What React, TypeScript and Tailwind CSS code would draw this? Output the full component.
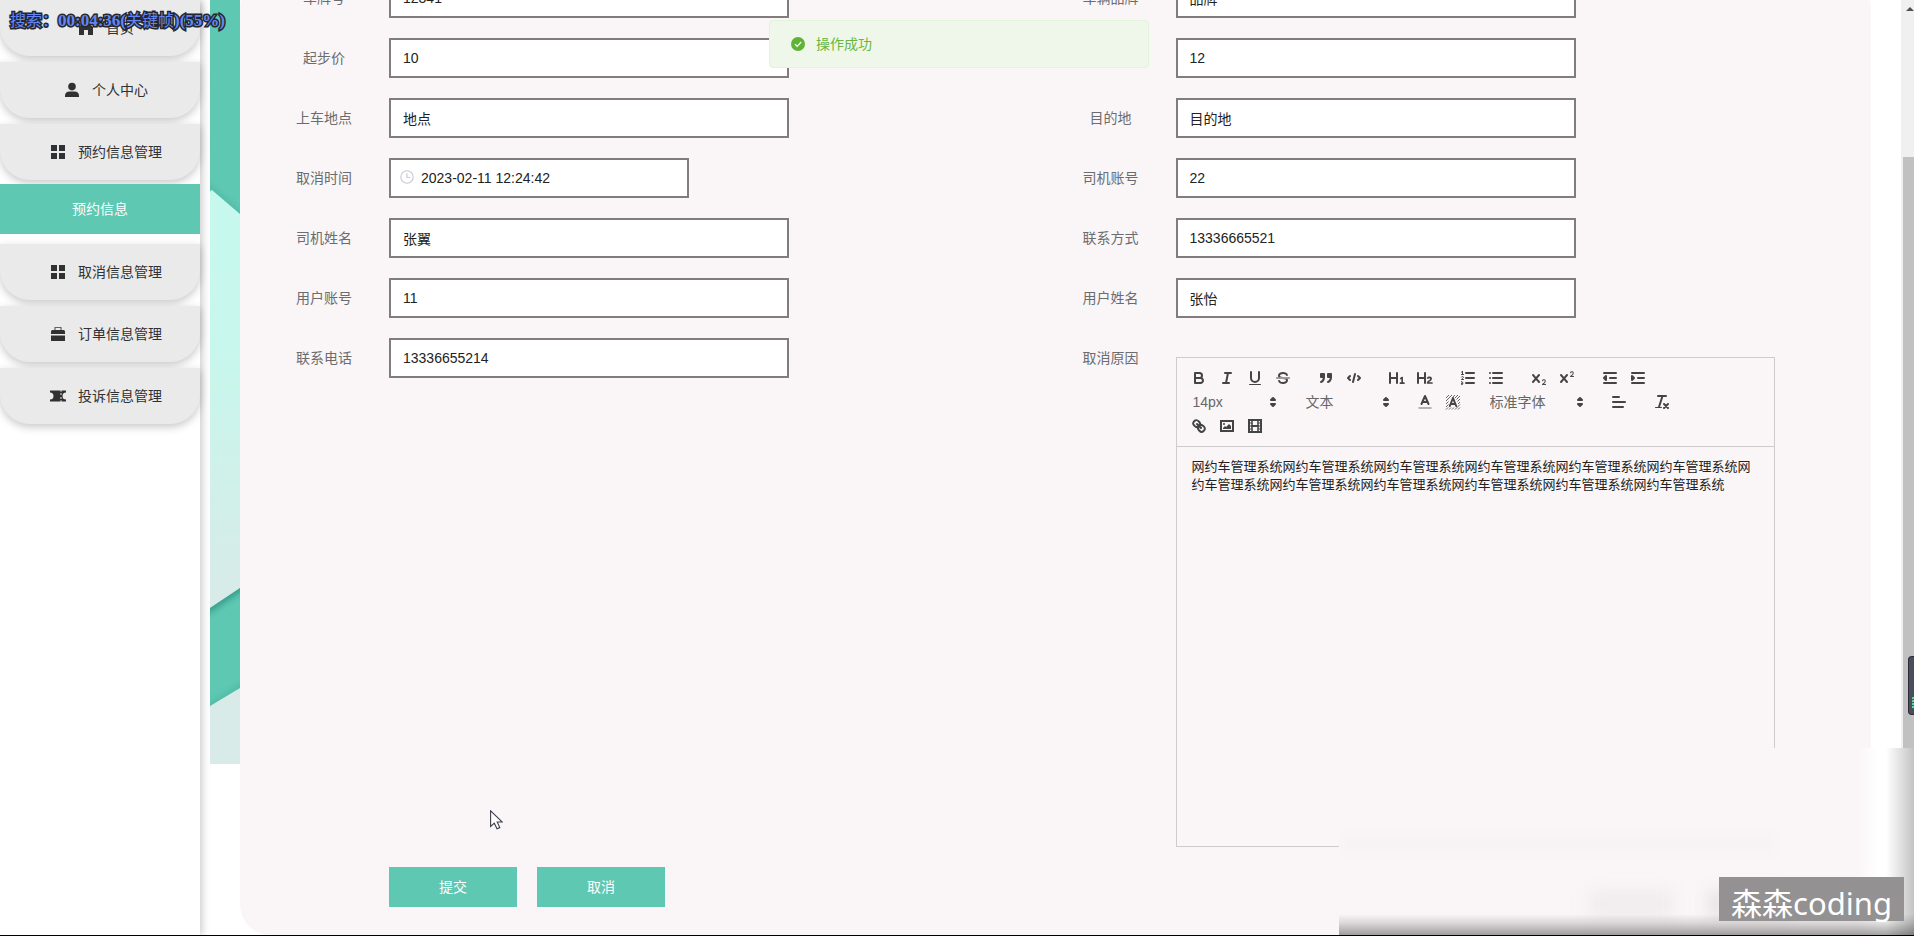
import React from "react";

const MENU_TOP = [
  { label: "首页", icon: "home" },
  { label: "个人中心", icon: "user" },
  { label: "预约信息管理", icon: "grid" },
];

const MENU_BOTTOM = [
  { label: "取消信息管理", icon: "grid" },
  { label: "订单信息管理", icon: "case" },
  { label: "投诉信息管理", icon: "ticket" },
];

function MenuIcon({ name }: { name: string }) {
  return (
    <svg viewBox="0 0 16 16" className="h-4 w-4 shrink-0 fill-[#303133]" aria-hidden="true">
      {name === "home" && <path d="M8 1 1 7v8h5v-5h4v5h5V7z" />}
      {name === "user" && (
        <>
          <circle cx="8" cy="4.6" r="3.8" />
          <path d="M1 15v-1.5C1 10.800 3 9.600 5.500 9.600h5c2.500 0 4.500 1.200 4.500 3.900V15z" />
        </>
      )}
      {name === "grid" && <path d="M1 1h6v6H1zM9 1h6v6H9zM1 9h6v6H1zM9 9h6v6H9z" />}
      {name === "case" && (
        <>
          <path d="M5 4V1.500h6V4" fill="none" stroke="#606266" strokeWidth="1.200" />
          <path d="M1 5.500Q1 4 2.500 4h11Q15 4 15 5.500V8H1zM1 9.500h14V15H1z" />
        </>
      )}
      {name === "ticket" && (
        <path d="M0 2.500h10.500v1.200h1V2.500H16v2a3.500 3.500 0 0 0 0 7v2h-4.500v-1.200h-1v1.200H0v-2a3.500 3.500 0 0 0 0-7zM10.500 5v2h1V5zm0 4v2h1V9z" fillRule="evenodd" />
      )}
    </svg>
  );
}

function MenuItem({ label, icon }: { label: string; icon: string }) {
  return (
    <a
      href="#"
      className="flex h-14 items-center justify-center gap-3 rounded-b-[30px] bg-[#eaeaea] pl-3 text-sm text-[#303133] shadow-[0_3px_8px_rgba(0,0,0,0.22)]"
    >
      <MenuIcon name={icon} />
      {label}
    </a>
  );
}

function Field({
  id,
  label,
  value,
  name,
}: {
  id: string;
  label?: string;
  value: string;
  name?: string;
}) {
  return (
    <div className="flex h-10 items-center">
      <label htmlFor={id} className="w-[130px] shrink-0 text-center text-sm text-[#6a6c70]">
        {label}
      </label>
      <input
        id={id}
        aria-label={name}
        defaultValue={value}
        className="h-10 w-[400px] border-2 border-[#827c7c] bg-white px-3 text-sm text-[#222] outline-none"
      />
    </div>
  );
}

function DateField() {
  return (
    <div className="flex h-10 items-center">
      <label htmlFor="cancelTime" className="w-[130px] shrink-0 text-center text-sm text-[#6a6c70]">
        取消时间
      </label>
      <div className="relative w-[300px]">
        <input
          id="cancelTime"
          defaultValue="2023-02-11 12:24:42"
          className="h-10 w-full border-2 border-[#827c7c] bg-white pr-3 pl-[30px] text-sm text-[#222] outline-none"
        />
        <svg viewBox="0 0 14 14" className="absolute top-[12px] left-[11px] h-3.5 w-3.5 fill-none stroke-[#c6c9d2]" aria-hidden="true">
          <circle cx="7" cy="7" r="6.200" strokeWidth="1.100" />
          <path d="M7 3.200V7.500h3.200" strokeWidth="1.100" />
        </svg>
      </div>
    </div>
  );
}

function Tool({ title, children }: { title: string; children: React.ReactNode }) {
  return (
    <button type="button" aria-label={title} className="flex h-6 w-7 items-center justify-center">
      <svg
        viewBox="0 0 18 18"
        className="h-[18px] w-[18px] fill-none stroke-[#444] stroke-2"
        strokeLinecap="round"
        strokeLinejoin="round"
        aria-hidden="true"
      >
        {children}
      </svg>
    </button>
  );
}

function Group({ children }: { children: React.ReactNode }) {
  return <div className="mr-[15px] flex">{children}</div>;
}

function Picker({ title, value, wide }: { title: string; value: string; wide?: boolean }) {
  return (
    <div className={wide ? "relative h-6 w-[108px]" : "relative h-6 w-[98px]"}>
      <select
        aria-label={title}
        defaultValue={value}
        className="h-6 w-full appearance-none bg-transparent pl-2 text-sm leading-6 text-[#666] outline-none"
      >
        <option>{value}</option>
      </select>
      <svg viewBox="0 0 18 18" className="pointer-events-none absolute top-[3px] right-px h-[18px] w-[18px] fill-[#444] stroke-[#444] stroke-2" strokeLinejoin="round" aria-hidden="true">
        <polygon points="7 11 9 13 11 11 7 11" />
        <polygon points="7 7 9 5 11 7 7 7" />
      </svg>
    </div>
  );
}

const solid = { fill: "#444", stroke: "none" };

function Toolbar() {
  return (
    <div className="flex flex-wrap border border-[#ccc] p-2">
      <Group>
        <Tool title="加粗">
          <path d="M5,4H9.500A2.500,2.500,0,0,1,12,6.500v0A2.500,2.500,0,0,1,9.500,9H5A0,0,0,0,1,5,9V4A0,0,0,0,1,5,4Z" />
          <path d="M5,9h5.500A2.500,2.500,0,0,1,13,11.500v0A2.500,2.500,0,0,1,10.500,14H5a0,0,0,0,1,0,0V9A0,0,0,0,1,5,9Z" />
        </Tool>
        <Tool title="斜体">
          <path d="M7 4H13M5 14H11M8 14 10 4" />
        </Tool>
        <Tool title="下划线">
          <path d="M5,3V9a4.012,4.012,0,0,0,4,4H9a4.012,4.012,0,0,0,4-4V3" />
          <rect x="3" y="15" width="12" height="1" rx="0.500" style={solid} />
        </Tool>
        <Tool title="删除线">
          <path d="M15.500 9H2.500" strokeWidth="1" />
          <path style={solid} d="M9.007,8C6.542,7.791,6,7.519,6,6.500,6,5.792,7.283,5,9,5c1.571,0,2.765.679,2.969,1.309a1,1,0,0,0,1.900-.617C13.356,4.106,11.354,3,9,3,6.200,3,4,4.538,4,6.500a3.200,3.200,0,0,0,.5,1.843Z" />
          <path style={solid} d="M8.984,10C11.457,10.208,12,10.479,12,11.500c0,0.708-1.283,1.500-3,1.500-1.571,0-2.765-.679-2.969-1.309a1,1,0,1,0-1.900.617C4.644,13.894,6.646,15,9,15c2.800,0,5-1.538,5-3.500a3.200,3.200,0,0,0-.5-1.843Z" />
        </Tool>
      </Group>
      <Group>
        <Tool title="引用">
          <g fill="#444">
            <rect x="4" y="5" width="3" height="3" />
            <rect x="11" y="5" width="3" height="3" />
          </g>
          <path fill="#444" fillRule="evenodd" d="M7,8c0,4.031-3,5-3,5M14,8c0,4.031-3,5-3,5" />
        </Tool>
        <Tool title="代码">
          <path d="M5 7 3 9 5 11M13 7 15 9 13 11M10 5 8 13" />
        </Tool>
      </Group>
      <Group>
        <Tool title="一级标题">
          <path style={solid} d="M10,4V14a1,1,0,0,1-2,0V10H3v4a1,1,0,0,1-2,0V4A1,1,0,0,1,3,4V8H8V4a1,1,0,0,1,2,0Zm6.068,9.209H14.981V8.433a.54.54,0,0,0-.605-.6h-.591a1.060,1.060,0,0,0-.781.341l-1.034.951a.494.494,0,0,0-.033.726l.341.407a.491.491,0,0,0,.738.033l.308-.264v3.182H12.268a.524.524,0,0,0-.594.583v.600a.524.524,0,0,0,.594.605h3.800a.522.522,0,0,0,.594-.605v-.600A.522.522,0,0,0,16.068,13.209Z" />
        </Tool>
        <Tool title="二级标题">
          <path style={solid} d="M16.739,13.814v.438a.541.541,0,0,1-.6.605h-4.650a.648.648,0,0,1-.691-.593c0-2.860,3.343-3.143,3.343-4.355a.742.742,0,0,0-.800-.692,1.174,1.174,0,0,0-.941.527.542.542,0,0,1-.833.100l-.500-.395a.500.500,0,0,1-.121-.738,2.668,2.668,0,0,1,2.475-1.148,2.279,2.279,0,0,1,2.544,2.235c0,2.087-2.500,2.675-2.920,3.411H16.140A.540.540,0,0,1,16.739,13.814ZM9,3A.990.990,0,0,0,8,4V8H3V4A1,1,0,0,0,1,4V14a1,1,0,0,0,2,0V10H8v4a1,1,0,0,0,2,0V4A1,1,0,0,0,9,3Z" />
        </Tool>
      </Group>
      <Group>
        <Tool title="有序列表">
          <path d="M7 4H15M7 9H15M7 14H15" />
          <path strokeWidth="1" d="M2.500 5.500H4.500M3.500 2.500V5.500M2.600 3 3.500 2.500M4.500 10.500H2.500C2.500 9.700 4.400 9.300 4.400 8.300A1 .9 0 0 0 2.500 8M2.500 14.500A1 .8 0 1 0 2.500 12.600M2.500 15.500A1 .8 0 1 0 3 14" />
        </Tool>
        <Tool title="无序列表">
          <path d="M6 4H15M6 9H15M6 14H15M3 4H3M3 9H3M3 14H3" />
        </Tool>
      </Group>
      <Group>
        <Tool title="下标">
          <path style={solid} d="M15.500,15H13.861a3.858,3.858,0,0,0,1.914-2.975,1.800,1.800,0,0,0-1.600-1.751A1.921,1.921,0,0,0,12.021,11.700a.501.501,0,0,0,.957.291h0a.914.914,0,0,1,1.053-.725.810.810,0,0,1,.744.762c0,1.076-1.169,1.871-1.988,2.418A1.456,1.456,0,0,0,12,15.500a.500.500,0,0,0,.5.5h3A.500.500,0,0,0,15.500,15Z" />
          <path style={solid} d="M9.650,5.241a1,1,0,0,0-1.409.108L6,7.964,3.759,5.349A1,1,0,0,0,2.192,6.591L4.684,9.500,2.241,12.350A1,1,0,0,0,3.710,13.706L6,11.036,8.290,13.650a1,1,0,1,0,1.519-1.300L7.316,9.500,9.759,6.651A1,1,0,0,0,9.650,5.241Z" />
        </Tool>
        <Tool title="上标">
          <path style={solid} d="M15.500,7H13.861a4.015,4.015,0,0,0,1.914-2.975,1.800,1.800,0,0,0-1.600-1.751A1.922,1.922,0,0,0,12.021,3.700a.5.5,0,1,0,.957.291.917.917,0,0,1,1.053-.725.810.810,0,0,1,.744.762c0,1.077-1.164,1.925-1.934,2.486A1.423,1.423,0,0,0,12,7.500a.5.5,0,0,0,.5.5h3A.5.5,0,0,0,15.500,7Z" />
          <path style={solid} d="M9.651,5.241a1,1,0,0,0-1.410.108L6,7.964,3.759,5.349a1,1,0,1,0-1.519,1.300L4.683,9.500,2.241,12.350a1,1,0,1,0,1.519,1.300L6,11.036,8.241,13.650a1,1,0,0,0,1.519-1.300L7.317,9.500,9.759,6.651A1,1,0,0,0,9.651,5.241Z" />
        </Tool>
      </Group>
      <Group>
        <Tool title="减少缩进">
          <path d="M3 14H15M3 4H15M9 9H15M5 7 5 11 3 9Z" />
        </Tool>
        <Tool title="增加缩进">
          <path d="M3 14H15M3 4H15M9 9H15" />
          <path fill="#444" d="M3 7 3 11 5 9Z" />
        </Tool>
      </Group>
      <Group>
        <Picker title="字号" value="14px" />
      </Group>
      <Group>
        <Picker title="段落" value="文本" />
      </Group>
      <Group>
        <Tool title="文字颜色">
          <path d="M5.500 11 9 3 12.500 11M6.400 9H11.600" />
          <path d="M3 15H15" strokeWidth="1.500" strokeOpacity="0.500" />
        </Tool>
        <Tool title="背景颜色">
          <path
            strokeWidth="1"
            strokeLinecap="butt"
            strokeOpacity="0.800"
            d="M2 5 5 2M2 8 8 2M2 11 4.500 8.500M8.500 4.500 11 2M2 14 4.500 11.500M11 5 14 2M2 16.500 4 14.500M12.500 6.500 16 3M5 16.500 7 14.500M13.500 8.500 16 6M8 16.500 10 14.500M14 11 16 9M11 16.500 16 11.500M14 16.500 16 14.500"
          />
          <path d="M5.800 13 9 5 12.200 13M6.700 11H11.300" />
        </Tool>
      </Group>
      <Group>
        <Picker title="字体" value="标准字体" wide />
      </Group>
      <Group>
        <Tool title="对齐方式">
          <path d="M3 9H15M3 14H13M3 4H9" />
        </Tool>
      </Group>
      <Group>
        <Tool title="清除格式">
          <path d="M5 3H13M6 14 9.500 3" />
          <path d="M11 11 15 15M15 11 11 15" />
          <rect x="2" y="14" width="7" height="1" rx="0.500" style={solid} />
        </Tool>
      </Group>
      <Group>
        <Tool title="链接">
          <path d="M7 7 11 11" />
          <path d="M8.900,4.577a3.476,3.476,0,0,1,.360,4.679A3.476,3.476,0,0,1,4.577,8.900C3.185,7.500,2.035,6.400,4.217,4.217S7.500,3.185,8.900,4.577Z" />
          <path d="M13.423,9.100a3.476,3.476,0,0,0-4.679-.360,3.476,3.476,0,0,0,.360,4.679c1.392,1.392,2.500,2.542,4.679.360S14.815,10.500,13.423,9.100Z" />
        </Tool>
        <Tool title="图片">
          <rect x="3" y="4" width="12" height="10" strokeLinejoin="miter" />
          <circle cx="6" cy="7" r="1" style={solid} />
          <polyline points="5 12 5 11 7 9 8 10 11 7 13 9 13 12 5 12" style={solid} />
        </Tool>
        <Tool title="视频">
          <rect x="3" y="3" width="12" height="12" strokeLinejoin="miter" />
          <path d="M6 3V15M12 3V15" strokeWidth="1.500" />
          <path d="M6 9H12" />
          <path d="M3 6H6M3 9H6M3 12H6M12 6H15M12 9H15M12 12H15" strokeWidth="1" />
        </Tool>
      </Group>
    </div>
  );
}

function Backdrop() {
  return (
    <svg viewBox="0 0 30 764" className="absolute top-0 left-0 h-[764px] w-[30px]" aria-hidden="true">
      <defs>
        <linearGradient id="mint" x1="0" y1="0" x2="0" y2="1">
          <stop offset="0.250" stopColor="#c6f9ee" />
          <stop offset="0.480" stopColor="#c8f6ec" />
          <stop offset="0.780" stopColor="#d8ebe8" />
        </linearGradient>
        <filter id="soft" x="-1" y="-0.500" width="3" height="2">
          <feGaussianBlur stdDeviation="3" />
        </filter>
        <clipPath id="band">
          <path d="M0 608 30 588V688L0 706Z" />
        </clipPath>
        <clipPath id="cap">
          <path d="M0 0H30V214L2 190 0 191Z" />
        </clipPath>
      </defs>
      <rect width="30" height="764" fill="url(#mint)" />
      <path d="M0 0H30V214L2 190 0 191Z" fill="#5ec8b3" />
      <g clipPath="url(#cap)">
        <path d="M-6 184 36 220" stroke="#2f8f7c" strokeWidth="4" opacity="0.400" filter="url(#soft)" />
      </g>
      <path d="M0 608 30 588V688L0 706Z" fill="#5ec8b3" />
      <g clipPath="url(#band)">
        <path d="M-6 612 36 584" stroke="#1f7a68" strokeWidth="6" opacity="0.700" filter="url(#soft)" />
        <path d="M-6 710 36 684" stroke="#2f8f7c" strokeWidth="3" opacity="0.500" filter="url(#soft)" />
      </g>
    </svg>
  );
}

export default function App() {
  return (
    <div className="relative flex h-screen overflow-hidden border-b border-black bg-white font-['Liberation_Sans','Noto_Sans_CJK_SC',sans-serif]">
      <nav className="relative w-[200px] shrink-0 bg-white shadow-[2px_0_8px_rgba(0,0,0,0.22)]">
        <div className="flex flex-col gap-1.5">
          {MENU_TOP.map((m) => (
            <MenuItem key={m.label} {...m} />
          ))}
        </div>
        <a href="#" className="relative mt-1 mb-2.5 flex h-[50px] items-center justify-center bg-[#5ec8b3] px-1 text-sm text-white">
          预约信息
        </a>
        <div className="flex flex-col gap-1.5">
          {MENU_BOTTOM.map((m) => (
            <MenuItem key={m.label} {...m} />
          ))}
        </div>
      </nav>

      <main className="relative ml-2.5 min-w-0 flex-1 px-[30px]">
        <Backdrop />
        <form className="-mt-[22px] rounded-[30px] bg-[#faf6f7] pr-[39px] pb-7 pl-[19px]">
          <div className="grid grid-cols-2 gap-y-5">
            <Field id="plate" label="车牌号" value="12341" />
            <Field id="brand" label="车辆品牌" value="品牌" />
            <Field id="basePrice" label="起步价" value="10" />
            <Field id="distance" name="公里" value="12" />
            <Field id="pickup" label="上车地点" value="地点" />
            <Field id="destination" label="目的地" value="目的地" />
            <DateField />
            <Field id="driverAccount" label="司机账号" value="22" />
            <Field id="driverName" label="司机姓名" value="张翼" />
            <Field id="contact" label="联系方式" value="13336665521" />
            <Field id="userAccount" label="用户账号" value="11" />
            <Field id="userName" label="用户姓名" value="张怡" />
            <Field id="phone" label="联系电话" value="13336655214" />
            <div className="flex items-start">
              <label htmlFor="reason" className="w-[130px] shrink-0 text-center text-sm leading-10 text-[#6a6c70]">
                取消原因
              </label>
              <div className="mt-[19px] w-[599px]">
                <Toolbar />
                <textarea
                  id="reason"
                  defaultValue={"网约车管理系统".repeat(12)}
                  className="block h-[400px] w-full resize-none border border-t-0 border-[#ccc] bg-transparent px-[15px] py-[11px] text-[13px] leading-[18px] text-[#222] outline-none"
                />
              </div>
            </div>
          </div>
          <div className="mt-5 ml-[130px] flex gap-5">
            <button type="button" className="h-10 w-32 bg-[#5ec8b3] text-sm text-white">
              提交
            </button>
            <button type="button" className="h-10 w-32 bg-[#5ec8b3] text-sm text-white">
              取消
            </button>
          </div>
        </form>
      </main>

      <div className="relative w-[13px] shrink-0 bg-[#f0f0f0]">
        <svg viewBox="0 0 8 4" className="absolute top-[7px] right-0 h-1 w-2 fill-[#505050]" aria-hidden="true">
          <path d="M0 4 4 0 8 4z" />
        </svg>
        <div className="mt-[157px] ml-0.5 h-full bg-[#c1c1c1]" />
        <div className="absolute top-[656px] right-0 h-[59px] w-1.5 rounded-l-[4px] border border-r-0 border-[#2b2d38] bg-[#4a4d5c]">
          <div className="mt-10 ml-[3px] h-3 bg-[repeating-linear-gradient(#5fd3a0_0_2px,#3c5f63_2px_3px)]" />
        </div>
      </div>

      <div role="status" className="absolute top-5 left-1/2 ml-[2px] flex h-12 w-[380px] -translate-x-1/2 items-center gap-[11px] rounded border border-[#e1f3d8] bg-[#eff7ea] pl-[21px] text-sm text-[#67b83f]">
        <svg viewBox="0 0 14 14" className="h-3.5 w-3.5" aria-hidden="true">
          <circle cx="7" cy="7" r="7" fill="#5fb336" />
          <path d="M4 7.200 6.200 9.300 10.200 5" fill="none" stroke="#fff" strokeWidth="1.200" />
        </svg>
        操作成功
      </div>

      <div className="absolute top-[11px] left-2.5 font-['Liberation_Serif','Noto_Sans_CJK_SC',serif] text-base leading-5 whitespace-nowrap text-[#6486f2] [-webkit-text-stroke:3px_#23262e] [paint-order:stroke_fill]">
        搜索：<span className="text-[17px] font-bold">00:04:36(</span>关键帧<span className="text-[17px] font-bold">)(55%)</span>
      </div>

      <svg viewBox="0 0 13 20" className="absolute top-[810px] left-[490px] h-5 w-[13px]" aria-hidden="true">
        <path d="M.6.800V16.500L4.300 13.200 7 18.800 9.800 17.600 7.200 12H12.300Z" fill="#fff" stroke="#3f3d4a" strokeWidth="1.100" />
      </svg>

      <div className="absolute right-0 -bottom-px h-[188px] w-[575px] overflow-hidden bg-[#faf6f7]">
        <div className="absolute top-[86px] left-0 h-5 w-[436px] bg-[#f7f3f4] blur-[4px]" />
        <div className="absolute top-[142px] left-[250px] h-7 w-[84px] bg-[#f0ecee] blur-[8px]" />
        <div className="absolute top-[142px] left-[368px] h-7 w-[84px] bg-[#e9e5e6] blur-[8px]" />
        <div className="absolute inset-y-0 right-0 w-[56px] bg-[linear-gradient(to_right,#faf6f7,#fff_38%,#fff_50%,#e2e2e2_75%,#c3c3c3)]" />
        <div className="absolute inset-x-0 bottom-0 h-[22px] bg-[linear-gradient(to_bottom,rgba(0,0,0,0),rgba(0,0,0,0.120)_40%,rgba(0,0,0,0.380))]" />
      </div>

      <div className="absolute right-2.5 bottom-3.5 flex h-11 w-[185px] items-center justify-center bg-[#939192] pt-2 font-['Noto_Sans','Noto_Sans_CJK_SC',sans-serif] text-[31px] leading-none font-normal text-white">
        森森coding
      </div>
    </div>
  );
}
